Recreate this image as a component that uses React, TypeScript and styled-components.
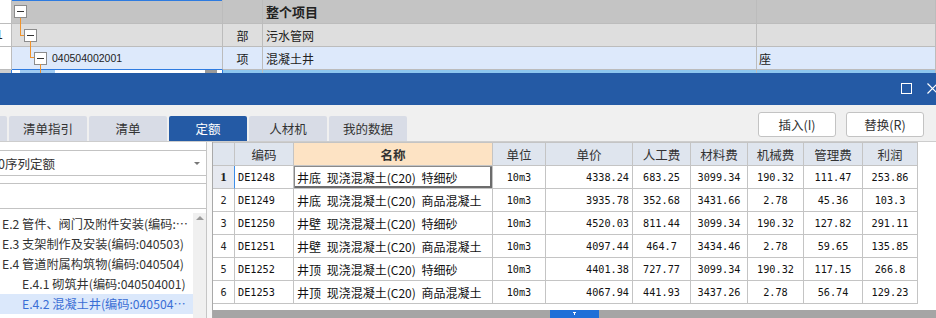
import React from "react";
import styled, { createGlobalStyle, css } from "styled-components";

const GlobalStyle = createGlobalStyle`
  html, body { margin: 0; padding: 0; background: #fff; }
  body { font-family: "Noto Sans CJK SC", "Noto Sans", sans-serif; overflow: hidden; }
  * { box-sizing: border-box; }
`;

const UI = `"Noto Sans CJK SC", "Noto Sans", sans-serif`;
const MONO = `"DejaVu Sans Mono", "Liberation Mono", "Noto Sans CJK SC", monospace`;

const Page = styled.div`
  position: relative;
  width: 936px;
  height: 318px;
  overflow: hidden;
  display: flex;
  flex-direction: column;
  background: #f0f0f0;
`;

/* ---------- top project grid ---------- */
const TopGrid = styled.div`
  flex: none;
  display: grid;
  grid-template-columns: 12px 211px 40px 494px 1fr;
  font-family: ${UI};
`;

type Tone = "head" | "gray" | "sel";
const toneBg: Record<Tone, string> = { head: "#c4c4c4", gray: "#dedede", sel: "#dde9fb" };

const GCell = styled.div<{
  $tone: Tone;
  $h: number;
  $white?: boolean;
  $center?: boolean;
  $pad?: number;
  $topBlue?: boolean;
  $bottomBlue?: boolean;
  $bold?: boolean;
}>`
  height: ${(p) => p.$h}px;
  background: ${(p) => (p.$white ? "#fff" : toneBg[p.$tone])};
  border-right: 1px solid #bcbcbc;
  border-bottom: 1px solid ${(p) => (p.$bottomBlue ? "#2e7be0" : "#bcbcbc")};
  ${(p) => p.$topBlue && css`box-shadow: inset 0 1px 0 #2e7be0;`}
  display: flex;
  align-items: center;
  justify-content: ${(p) => (p.$center ? "center" : "flex-start")};
  padding-left: ${(p) => p.$pad ?? 0}px;
  font-size: ${(p) => (p.$bold ? 13 : 12)}px;
  font-weight: ${(p) => (p.$bold ? 700 : 400)};
  color: #222;
  white-space: nowrap;
  overflow: hidden;
`;

const CutNum = styled.span`
  font-family: "Liberation Sans", sans-serif;
  font-size: 12px;
  margin-left: -4px;
`;

const Toggle = styled.span`
  position: relative;
  flex: none;
  width: 13px;
  height: 13px;
  border: 1px solid #8c8c8c;
  background: #fff;
  &::after {
    content: "";
    position: absolute;
    left: 2px;
    top: 5px;
    width: 7px;
    height: 1px;
    background: #333;
  }
`;

const Code = styled.span`
  margin-left: 5px;
  font-family: "Liberation Sans", sans-serif;
  font-size: 10.5px;
  color: #222;
`;

const StripCell = styled.div<{ $kind: "num" | "edit" | "rest" }>`
  height: 3px;
  position: relative;
  border-right: 1px solid ${(p) => (p.$kind === "edit" ? "#2e7be0" : "#bcbcbc")};
  background: ${(p) => (p.$kind === "num" ? "#cfcfcf" : p.$kind === "edit" ? "#fff" : "#8cc6ef")};
  ${(p) => p.$kind === "edit" && css`border-left: 1px solid #2e7be0; margin-left: -1px;`}
  display: flex;
`;

const StripBar = styled.span<{ $tone: "blue" | "gray"; $w: number; $ml: number }>`
  width: ${(p) => p.$w}px;
  margin-left: ${(p) => p.$ml}px;
  height: 3px;
  background: ${(p) => (p.$tone === "blue" ? "#9fcaf1" : "#9a9a9a")};
`;

const TreeLines = styled.svg`
  position: absolute;
  left: 0;
  top: 0;
  pointer-events: none;
`;

/* ---------- dialog ---------- */
const TitleBar = styled.div`
  flex: none;
  height: 32px;
  background: #245aa5;
  display: flex;
  align-items: center;
  justify-content: flex-end;
  padding-bottom: 1px;
`;

const WinIcon = styled.svg<{ $gap: number; $mr: number }>`
  display: block;
  margin-left: ${(p) => p.$gap}px;
  margin-right: ${(p) => p.$mr}px;
`;

const Toolbar = styled.div`
  flex: none;
  height: 36px;
  display: flex;
  background: #f0f0f0;
`;

const Tabs = styled.div`
  display: flex;
  gap: 2px;
  margin-left: -71px;
  align-self: flex-end;
`;

const Tab = styled.div<{ $active?: boolean }>`
  width: 78px;
  height: 25px;
  border-radius: 2px 2px 0 0;
  background: ${(p) => (p.$active ? "#245aa5" : "#d8dce6")};
  color: ${(p) => (p.$active ? "#fff" : "#333")};
  font-family: ${UI};
  font-size: 12.5px;
  display: flex;
  align-items: center;
  justify-content: center;
`;

const Buttons = styled.div`
  margin-left: auto;
  margin-right: 12px;
  margin-top: 7px;
  display: flex;
  gap: 10px;
  align-self: flex-start;
`;

const Button = styled.button`
  width: 78px;
  height: 25px;
  padding: 0;
  background: #fff;
  border: 1px solid #c3c3c3;
  border-radius: 3px;
  font-family: ${UI};
  font-size: 12.5px;
  color: #333;
  display: flex;
  align-items: center;
  justify-content: center;
`;

const Body = styled.div`
  flex: 1;
  min-height: 0;
  display: flex;
  border-top: 1px solid #cdcdcd;
  background: #fff;
`;

/* ---------- left panel ---------- */
const LeftPanel = styled.div`
  flex: none;
  width: 207px;
  border-right: 1px solid #c6c6c6;
  padding-top: 8px;
  display: flex;
  flex-direction: column;
  background: #fff;
  overflow: hidden;
`;

const Select = styled.div`
  height: 26px;
  border-top: 1px solid #c3c3c3;
  border-bottom: 1px solid #c3c3c3;
  display: flex;
  align-items: center;
  font-family: ${UI};
  font-size: 12.5px;
  color: #333;
  span { margin-left: -2px; }
`;

const Caret = styled.i`
  margin-left: auto;
  margin-right: 6px;
  width: 0;
  height: 0;
  border-left: 3px solid transparent;
  border-right: 3px solid transparent;
  border-top: 3px solid #777;
`;

const Search = styled.div`
  height: 26px;
  margin-top: 7px;
  border-top: 1px solid #c3c3c3;
  border-bottom: 1px solid #c3c3c3;
  background: #fff;
`;

const ListWrap = styled.div`
  flex: 1;
  min-height: 0;
  margin-top: 4px;
  display: flex;
`;

const Items = styled.div`
  width: 193px;
  padding-top: 1px;
  display: flex;
  flex-direction: column;
  overflow: hidden;
`;

const Item = styled.div<{ $level: number; $sel?: boolean }>`
  flex: none;
  height: 20px;
  line-height: 20px;
  padding-left: ${(p) => 2 + p.$level * 20}px;
  padding-right: 4px;
  font-family: ${UI};
  font-size: 12.2px;
  color: ${(p) => (p.$sel ? "#3a6ed5" : "#333")};
  background: ${(p) => (p.$sel ? "#dbe8fb" : "transparent")};
  white-space: nowrap;
  overflow: hidden;
  text-overflow: ellipsis;
`;

const VScroll = styled.div`
  flex: none;
  width: 13px;
  background: #f0f0f0;
  display: flex;
  justify-content: center;
  padding-top: 3px;
`;

const UpArrow = styled.i`
  width: 0;
  height: 0;
  border-left: 4px solid transparent;
  border-right: 4px solid transparent;
  border-bottom: 4px solid #9a9a9a;
`;

const Splitter = styled.div`
  flex: none;
  width: 5px;
  background: #f7f7f7;
`;

/* ---------- quota table ---------- */
const TablePane = styled.div`
  flex: 1;
  min-width: 0;
  border-left: 1px solid #a9a9a9;
  display: flex;
  flex-direction: column;
  background: #fff;
`;

const COLS = "22px 59px 199px 53px 87px 58px 57px 56px 59px 55px";

const Row = styled.div<{ $head?: boolean }>`
  display: grid;
  grid-template-columns: ${COLS};
  height: ${(p) => (p.$head ? 24 : 23)}px;
  width: 705px;
  flex: none;
`;

const HeadCell = styled.div<{ $main?: boolean }>`
  border-top: 1px solid #c4c4c4;
  border-right: 1px solid #c4c4c4;
  border-bottom: 1px solid #c4c4c4;
  background: ${(p) => (p.$main ? "#fde3c4" : "#dfe5ee")};
  font-family: ${UI};
  font-size: 12.5px;
  font-weight: ${(p) => (p.$main ? 700 : 400)};
  color: #333;
  display: flex;
  align-items: center;
  justify-content: center;
`;

type Align = "left" | "center" | "right";
const justify: Record<Align, string> = { left: "flex-start", center: "center", right: "flex-end" };

const Cell = styled.div<{ $align: Align; $kind: "mono" | "text"; $focus?: boolean }>`
  border-right: 1px solid #c4c4c4;
  border-bottom: 1px solid #c4c4c4;
  display: flex;
  align-items: center;
  justify-content: ${(p) => justify[p.$align]};
  padding: 0 3px;
  white-space: nowrap;
  overflow: hidden;
  color: #111;
  font-family: ${(p) => (p.$kind === "mono" ? MONO : UI)};
  font-size: ${(p) => (p.$kind === "mono" ? "10.2px" : "12px")};
  word-spacing: ${(p) => (p.$kind === "text" ? "3px" : "0")};
  ${(p) =>
    p.$focus &&
    css`
      box-shadow: inset 1px 1px 0 #8a8a8a, inset -2px -2px 0 #6c6c6c;
    `}
`;

const NumCell = styled.div<{ $current?: boolean }>`
  border-right: 1px solid ${(p) => (p.$current ? "#3d8ee8" : "#c4c4c4")};
  border-bottom: 1px solid #c4c4c4;
  background: ${(p) => (p.$current ? "#e6e9f0" : "#fff")};
  display: flex;
  align-items: center;
  justify-content: center;
  font-family: ${(p) => (p.$current ? `"Liberation Serif", serif` : MONO)};
  font-size: ${(p) => (p.$current ? "13px" : "10.2px")};
  font-weight: ${(p) => (p.$current ? 700 : 400)};
  color: #222;
`;

const Filler = styled.div`
  flex: 1;
`;

const HScroll = styled.div`
  flex: none;
  height: 8px;
  background: #a5a5a5;
  display: flex;
`;

const Thumb = styled.div`
  position: relative;
  margin-left: 337px;
  width: 49px;
  height: 8px;
  background: #1f6fd8;
  &::before {
    content: "";
    position: absolute;
    left: 23px;
    top: 2px;
    width: 3px;
    height: 1px;
    background: #fff;
  }
  &::after {
    content: "";
    position: absolute;
    left: 24px;
    top: 2px;
    width: 1px;
    height: 3px;
    background: #fff;
  }
`;

const headers = ["编码", "名称", "单位", "单价", "人工费", "材料费", "机械费", "管理费", "利润"];

const rows: string[][] = [
  ["DE1248", "井底 现浇混凝土(C20) 特细砂", "10m3", "4338.24", "683.25", "3099.34", "190.32", "111.47", "253.86"],
  ["DE1249", "井底 现浇混凝土(C20) 商品混凝土", "10m3", "3935.78", "352.68", "3431.66", "2.78", "45.36", "103.3"],
  ["DE1250", "井壁 现浇混凝土(C20) 特细砂", "10m3", "4520.03", "811.44", "3099.34", "190.32", "127.82", "291.11"],
  ["DE1251", "井壁 现浇混凝土(C20) 商品混凝土", "10m3", "4097.44", "464.7", "3434.46", "2.78", "59.65", "135.85"],
  ["DE1252", "井顶 现浇混凝土(C20) 特细砂", "10m3", "4401.38", "727.77", "3099.34", "190.32", "117.15", "266.8"],
  ["DE1253", "井顶 现浇混凝土(C20) 商品混凝土", "10m3", "4067.94", "441.93", "3437.26", "2.78", "56.74", "129.23"],
];

const colAlign: Align[] = ["left", "left", "center", "right", "center", "center", "center", "center", "center"];

const treeItems: { level: number; text: string; sel?: boolean }[] = [
  { level: 0, text: "E.2 管件、阀门及附件安装(编码:040502)" },
  { level: 0, text: "E.3 支架制作及安装(编码:040503)" },
  { level: 0, text: "E.4 管道附属构筑物(编码:040504)" },
  { level: 1, text: "E.4.1 砌筑井(编码:040504001)" },
  { level: 1, text: "E.4.2 混凝土井(编码:040504002)", sel: true },
  { level: 1, text: "E.4.3 塑料检查井(编码:040504003)" },
];

export default function App() {
  return (
    <>
      <GlobalStyle />
      <Page>
        <TopGrid>
          <GCell $tone="head" $h={24} $white />
          <GCell $tone="head" $h={24} $pad={2} $topBlue>
            <Toggle />
          </GCell>
          <GCell $tone="head" $h={24} />
          <GCell $tone="head" $h={24} $pad={3} $bold>
            整个项目
          </GCell>
          <GCell $tone="head" $h={24} />

          <GCell $tone="gray" $h={23} $white>
            <CutNum>1</CutNum>
          </GCell>
          <GCell $tone="gray" $h={23} $pad={12}>
            <Toggle />
          </GCell>
          <GCell $tone="gray" $h={23} $center>
            部
          </GCell>
          <GCell $tone="gray" $h={23} $pad={3}>
            污水管网
          </GCell>
          <GCell $tone="gray" $h={23} />

          <GCell $tone="sel" $h={23} $white />
          <GCell $tone="sel" $h={23} $pad={22} $bottomBlue>
            <Toggle />
            <Code>040504002001</Code>
          </GCell>
          <GCell $tone="sel" $h={23} $center>
            项
          </GCell>
          <GCell $tone="sel" $h={23} $pad={3}>
            混凝土井
          </GCell>
          <GCell $tone="sel" $h={23} $pad={2}>
            座
          </GCell>

          <StripCell $kind="num" />
          <StripCell $kind="edit">
            <StripBar $tone="blue" $w={35} $ml={8} />
            <StripBar $tone="gray" $w={12} $ml={150} />
          </StripCell>
          <StripCell $kind="rest" />
          <StripCell $kind="rest" />
          <StripCell $kind="rest" />
        </TopGrid>
        <TreeLines width="60" height="73" viewBox="0 0 60 73">
          <path
            d="M20.5 18 V35.5 H24 M30.5 41 V57.5 H34 M40.5 64 V73"
            fill="none"
            stroke="#f0932b"
            strokeWidth="1"
            shapeRendering="crispEdges"
          />
        </TreeLines>

        <TitleBar>
          <WinIcon $gap={0} $mr={0} width="11" height="11" viewBox="0 0 11 11">
            <rect x="0.5" y="0.5" width="10" height="10" fill="none" stroke="#fff" strokeWidth="1" />
          </WinIcon>
          <WinIcon $gap={15} $mr={-2} width="11" height="11" viewBox="0 0 11 11">
            <path d="M0.5 0.5 L10.5 10.5 M10.5 0.5 L0.5 10.5" fill="none" stroke="#fff" strokeWidth="1.2" />
          </WinIcon>
        </TitleBar>

        <Toolbar>
          <Tabs>
            <Tab>定额指引</Tab>
            <Tab>清单指引</Tab>
            <Tab>清单</Tab>
            <Tab $active>定额</Tab>
            <Tab>人材机</Tab>
            <Tab>我的数据</Tab>
          </Tabs>
          <Buttons>
            <Button>插入(I)</Button>
            <Button>替换(R)</Button>
          </Buttons>
        </Toolbar>

        <Body>
          <LeftPanel>
            <Select>
              <span>0序列定额</span>
              <Caret />
            </Select>
            <Search />
            <ListWrap>
              <Items>
                {treeItems.map((it) => (
                  <Item key={it.text} $level={it.level} $sel={it.sel}>
                    {it.text}
                  </Item>
                ))}
              </Items>
              <VScroll>
                <UpArrow />
              </VScroll>
            </ListWrap>
          </LeftPanel>
          <Splitter />
          <TablePane>
            <Row $head>
              <HeadCell />
              {headers.map((h) => (
                <HeadCell key={h} $main={h === "名称"}>
                  {h}
                </HeadCell>
              ))}
            </Row>
            {rows.map((r, i) => (
              <Row key={r[0]}>
                <NumCell $current={i === 0}>{i + 1}</NumCell>
                {r.map((v, j) => (
                  <Cell
                    key={j}
                    $align={colAlign[j]}
                    $kind={j === 1 ? "text" : "mono"}
                    $focus={i === 0 && j === 1}
                  >
                    {v}
                  </Cell>
                ))}
              </Row>
            ))}
            <Filler />
            <HScroll>
              <Thumb />
            </HScroll>
          </TablePane>
        </Body>
      </Page>
    </>
  );
}
